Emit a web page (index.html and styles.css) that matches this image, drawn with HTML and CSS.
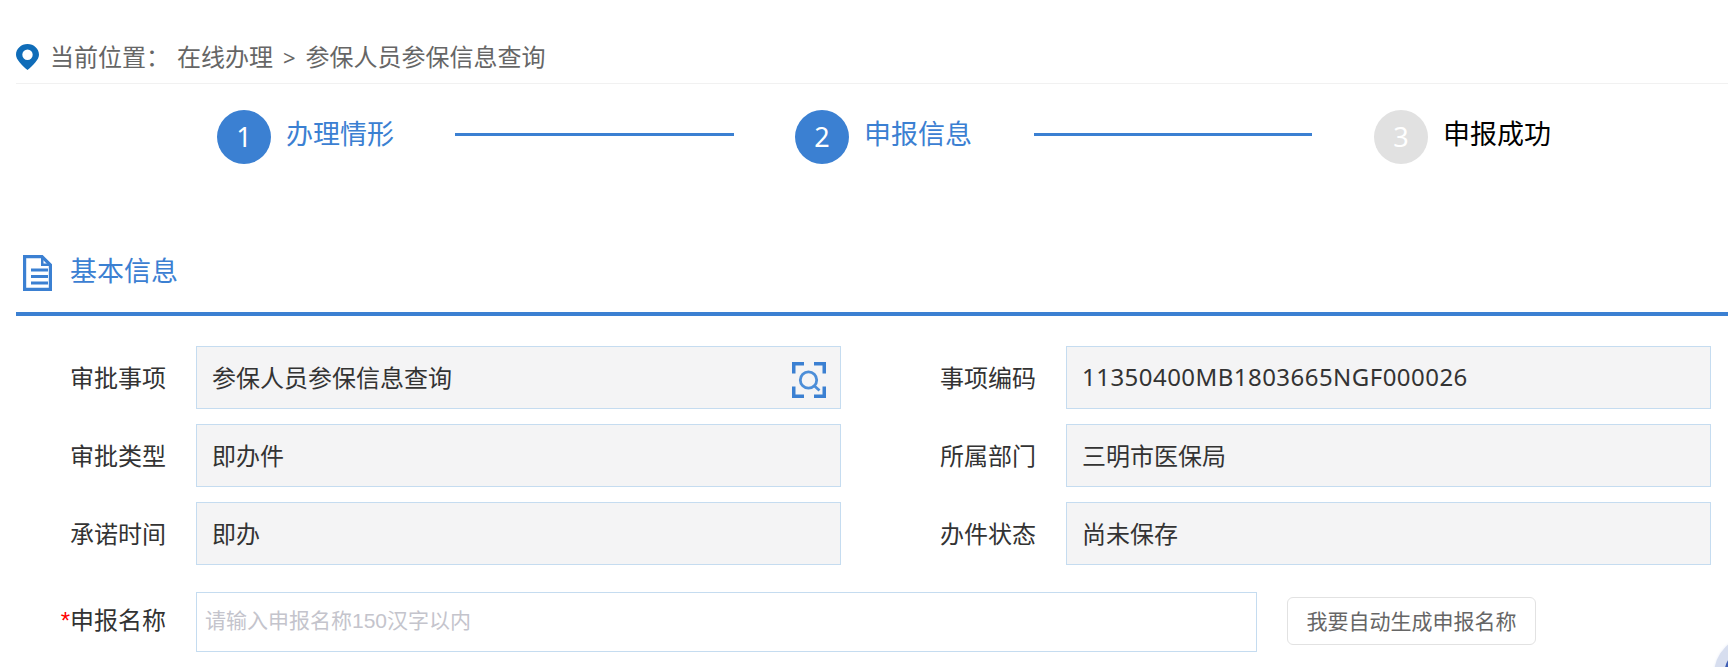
FILE: index.html
```html
<!DOCTYPE html>
<html lang="zh-CN">
<head>
<meta charset="utf-8">
<title>参保人员参保信息查询</title>
<link rel="stylesheet" href="styles.css">
</head>
<body>
<div class="page">
  <nav class="crumb">
    <svg class="pin" viewBox="0 0 23 26"><path fill="#0f6cb8" fill-rule="evenodd" d="M11.500 0C5.100 0 0 4.800 0 10.700c0 4.700 5.600 10.400 11.500 15.300C17.400 21.100 23 15.400 23 10.700 23 4.800 17.900 0 11.500 0zm0 5.600a5.200 5.200 0 1 1 0 10.400 5.200 5.200 0 0 1 0-10.400z"/></svg>
    <span class="crumb-label">当前位置：</span>
    <span>在线办理</span>
    <span class="crumb-sep">&gt;</span>
    <span>参保人员参保信息查询</span>
  </nav>
  <div class="steps">
    <div class="step done"><span class="dot">1</span><span class="step-name">办理情形</span></div>
    <div class="link"></div>
    <div class="step done mid"><span class="dot">2</span><span class="step-name">申报信息</span></div>
    <div class="link short"></div>
    <div class="step"><span class="dot">3</span><span class="step-name">申报成功</span></div>
  </div>
  <div class="section-head">
    <svg class="doc" viewBox="0 0 29 36"><path fill="none" stroke="#3b80d2" stroke-width="3.200" d="M1.600 1.600h17.400l8.400 8.400v24.400H1.600z"/><path fill="#3b80d2" d="M18 2h2.500v6.500H27v2.500h-9z"/><path fill="none" stroke="#3b80d2" stroke-width="2.800" d="M8 15h17M8 21.500h17M8 28h17"/></svg>
    <h2>基本信息</h2>
  </div>
  <form class="form">
    <div class="field">
      <label>审批事项</label>
      <div class="value">参保人员参保信息查询
        <svg class="scan" viewBox="0 0 34 36"><path fill="none" stroke="#3b80d2" stroke-width="3.500" d="M1.750 11.500V1.750H12M22 1.750h10.250V11.500M1.750 24.500v9.750H12M22 34.250h10.250V24.500"/><circle cx="16.500" cy="18" r="8.200" fill="none" stroke="#4c8ed8" stroke-width="2.800"/><path stroke="#4c8ed8" stroke-width="2.800" d="M22.500 24l5 4.500"/></svg>
      </div>
    </div>
    <div class="field">
      <label>事项编码</label>
      <div class="value code">11350400MB1803665NGF000026</div>
    </div>
    <div class="field"><label>审批类型</label><div class="value">即办件</div></div>
    <div class="field"><label>所属部门</label><div class="value">三明市医保局</div></div>
    <div class="field"><label>承诺时间</label><div class="value">即办</div></div>
    <div class="field"><label>办件状态</label><div class="value">尚未保存</div></div>
    <div class="field wide">
      <label><span class="req">*</span>申报名称</label>
      <input class="name-input" type="text" placeholder="请输入申报名称150汉字以内">
      <button class="auto" type="button">我要自动生成申报名称</button>
    </div>
  </form>
</div>
<div class="float-ball"></div>
</body>
</html>
```
FILE: styles.css
```css
* { box-sizing: border-box; }
html, body { margin: 0; height: 100%; }
body {
  background: #fff;
  overflow: hidden;
  font-family: "Noto Sans", "Noto Sans CJK SC", sans-serif;
  color: #333;
}
.page { padding-left: 16px; }
.crumb {
  height: 84px;
  padding-top: 39px;
  display: flex;
  align-items: flex-start;
  border-bottom: 1px solid #f1f1f1;
  font-size: 24px;
  line-height: 36px;
  color: #666;
  white-space: nowrap;
}
.pin { width: 23px; height: 26px; margin: 5px 11px 0 0; flex: none; }
.crumb-label { margin-right: 7px; width: 120px; }
.crumb-sep { margin: 0 10px 0 10px; font-size: 22px; }
.steps {
  display: flex;
  align-items: flex-start;
  padding: 26px 0 0 201px;
  height: 171px;
}
.step { display: flex; width: 238px; flex: none; }
.step.mid { width: 239px; }
.dot {
  width: 54px;
  height: 54px;
  border-radius: 50%;
  background: #e1e1e1;
  color: #fff;
  font-size: 27px;
  line-height: 54px;
  text-align: center;
  flex: none;
}
.step-name {
  margin: 2px 0 0 15px;
  font-size: 27px;
  line-height: 44px;
  color: #000;
  white-space: nowrap;
}
.done .dot { background: #3b80d2; }
.done .step-name { color: #3b80d2; }
.link {
  width: 279px;
  height: 3px;
  margin: 23px 61px 0 0;
  background: #3b80d2;
  flex: none;
}
.link.short { width: 278px; margin-right: 62px; }
.section-head {
  height: 61px;
  border-bottom: 4px solid #3b80d2;
  display: flex;
  align-items: flex-start;
}
.doc { width: 29px; height: 36px; margin-left: 7px; flex: none; }
h2 {
  margin: -2px 0 0 18px;
  font-size: 27px;
  font-weight: 400;
  line-height: 36px;
  color: #3b80d2;
}
.form {
  display: grid;
  grid-template-columns: 825px 1fr;
  grid-auto-rows: 63px;
  row-gap: 15px;
  padding: 30px 17px 0 0;
}
.field { display: flex; align-items: center; min-width: 0; }
.field label {
  width: 150px;
  flex: none;
  padding-bottom: 2px;
  text-align: right;
  font-size: 24px;
  color: #333;
  white-space: nowrap;
}
.value {
  position: relative;
  height: 63px;
  margin-left: 30px;
  width: 645px;
  flex: none;
  padding: 0 0 3px 15px;
  display: flex;
  align-items: center;
  background: #f4f4f5;
  border: 1px solid #c5dcf0;
  font-size: 24px;
  color: #333;
}
.code { letter-spacing: 0.46px; }
.field:nth-child(even) label { width: 195px; }
.field:nth-child(even) .value { flex: 1; width: auto; }
.scan { position: absolute; right: 14px; top: 15px; width: 34px; height: 36px; }
.wide { grid-column: 1 / -1; margin-top: 12px; height: 60px; }
.wide label { padding-bottom: 4px; line-height: 36px; }
.name-input {
  width: 1061px;
  height: 60px;
  margin-left: 30px;
  padding: 0 8px 2px;
  border: 1px solid #c5dcf0;
  background: #fff;
  font-family: "Liberation Sans", "Noto Sans CJK SC", sans-serif;
  font-size: 21px;
  outline: 0;
}
.name-input::placeholder { color: #c4c4cc; opacity: 1; }
.auto {
  width: 249px;
  height: 48px;
  margin: 0 0 2px 30px;
  padding: 0 0 2px;
  border: 1px solid #e2e2e2;
  border-radius: 6px;
  background: #fff;
  font-family: "Noto Sans CJK SC", sans-serif;
  font-size: 21px;
  color: #666;
}
.req { color: #f00; font-family: "Liberation Sans", sans-serif; font-size: 24px; }
.float-ball {
  position: fixed;
  left: 1714px;
  top: 635px;
  width: 80px;
  height: 80px;
  border-radius: 50%;
  background: #3f5fb5;
  border: 10px solid #d7deef;
  box-shadow: 0 0 3px #e6eaf6;
}
```
